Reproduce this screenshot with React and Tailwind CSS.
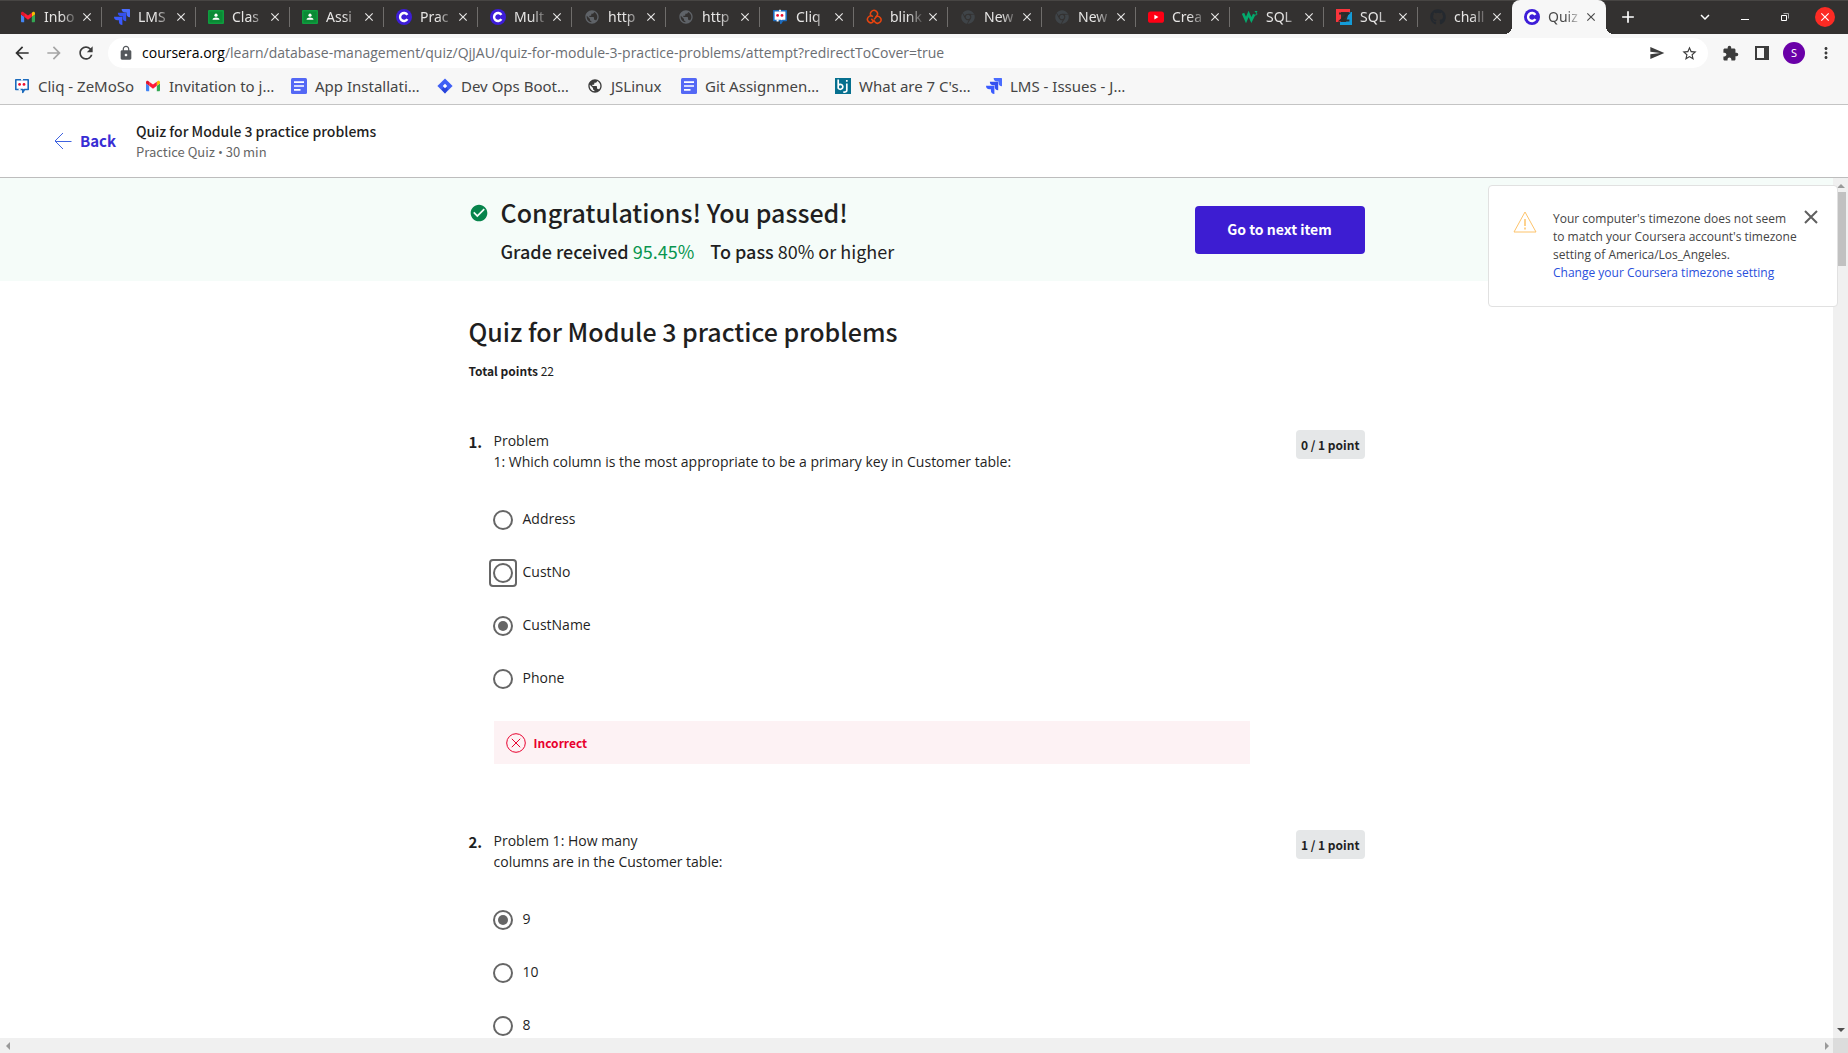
import React from "react";
import {
  MdArrowBack,
  MdArrowForward,
  MdRefresh,
  MdLock,
  MdSend,
  MdStarBorder,
  MdExtension,
  MdMoreVert,
  MdClose,
  MdAdd,
  MdExpandMore,
  MdPublic,
  MdCheckCircle,
} from "react-icons/md";
import { FaGithub, FaChrome } from "react-icons/fa";

const ui = "font-['Noto_Sans','Open_Sans',sans-serif]";
const heading = "font-['Noto_Sans_CJK_SC','Open_Sans',sans-serif]";

function Gmail() {
  return (
    <svg viewBox="52 42 88 66" className="h-3 w-[14px]">
      <path fill="#4285f4" d="M58 108h14V74L52 59v43c0 3.32 2.69 6 6 6" />
      <path fill="#34a853" d="M120 108h14c3.32 0 6-2.69 6-6V59l-20 15" />
      <path fill="#fbbc04" d="M120 48v26l20-15v-8c0-7.42-8.47-11.65-14.4-7.2" />
      <path fill="#ff1a36" d="M72 74V48l24 18 24-18v26L96 92" />
      <path fill="#e0142c" d="M52 51v8l20 15V48l-5.6-4.2c-5.94-4.45-14.4-.22-14.4 7.2" />
    </svg>
  );
}

function Jira() {
  return (
    <svg viewBox="0 0 24 24" className="size-4">
      <path fill="#3b5bff" d="M11.571 11.513H0a5.218 5.218 0 0 0 5.232 5.215h2.13v2.057A5.215 5.215 0 0 0 12.575 24V12.518a1.005 1.005 0 0 0-1.005-1.005z" />
      <path fill="#3450ee" d="M17.294 5.757H5.736a5.215 5.215 0 0 0 5.215 5.214h2.129v2.058a5.218 5.218 0 0 0 5.215 5.214V6.758a1.001 1.001 0 0 0-1.001-1.001z" />
      <path fill="#4a6cff" d="M23.013 0H11.455a5.215 5.215 0 0 0 5.215 5.215h2.129v2.057A5.215 5.215 0 0 0 24 12.483V1.005A1.005 1.005 0 0 0 23.013 0Z" />
    </svg>
  );
}

function Classroom() {
  return (
    <svg viewBox="0 0 16 16" className="size-4">
      <rect y="1" width="16" height="14" rx="1" fill="#0f9d3f" />
      <rect x="1.5" y="2.5" width="13" height="11" fill="#0a8a35" />
      <circle cx="8" cy="6.2" r="1.6" fill="#fff" />
      <path d="M4.5 10.8c0-1.7 1.8-2.4 3.5-2.4s3.5.7 3.5 2.4z" fill="#fff" />
    </svg>
  );
}

function Coursera() {
  return (
    <svg viewBox="0 0 16 16" className="size-4">
      <circle cx="8" cy="8" r="8" fill="#3d1dd8" />
      <path d="M11.4 10.2A4 4 0 1 1 11.4 5.8" fill="none" stroke="#fff" strokeWidth="2.4" />
    </svg>
  );
}

function Cliq() {
  return (
    <svg viewBox="0 0 16 16" className="size-4">
      <path d="M1.8 1.8h12.4v9.7H10.5L8.8 14.4V11.5H1.8z" fill="#fff" stroke="#1c6bbd" strokeWidth="1.6" strokeLinejoin="round" />
      <path d="M8 .8v1.8M4.6 11.5h2" stroke="#fff" strokeWidth="1.8" />
      <circle cx="5.6" cy="6.4" r="1.4" fill="#f00f2e" />
      <circle cx="10" cy="6.4" r="1.4" fill="#f00f2e" />
    </svg>
  );
}

function Loops() {
  return (
    <svg viewBox="0 0 16 16" className="size-4" fill="none" stroke="#e8440f" strokeWidth="1.5">
      <path d="M5.4 7.2A3.5 3.5 0 1 1 10.9 6.8L8.2 10.4" />
      <path d="M7 7.6A3.4 3.4 0 1 0 7.4 12.6L5.4 9.8" />
      <path d="M9.6 8A3.4 3.4 0 1 1 9 13L7.4 10.8" />
    </svg>
  );
}

function YouTube() {
  return (
    <svg viewBox="0 0 16 16" className="size-4">
      <rect y="2.4" width="16" height="11.4" rx="2.6" fill="#ff0014" />
      <path d="M6.4 5.8v4.6L10.4 8.1z" fill="#fff" />
    </svg>
  );
}

function W3() {
  return (
    <svg viewBox="0 0 16 16" className="size-4" fill="none" stroke="#04aa6d">
      <path d="M1 4.2L4 11L6.6 5L9.4 11L12.2 5.4" strokeWidth="2.6" />
      <path d="M12.8 2.5h2.2L13.8 4c1.6 0 1.6 2 0 2l-1-.3" strokeWidth="1" />
    </svg>
  );
}

function ZBlock() {
  return (
    <svg viewBox="0 0 16 16" className="size-4">
      <path d="M0 0h14v3H5v10H0z" fill="#f8353c" />
      <path d="M16 3v13H4v-3h6l3-10z" fill="#149bd7" />
      <path d="M3 4.6h9.4L4.4 11.4h9" fill="none" stroke="#2b2a2a" strokeWidth="2" />
    </svg>
  );
}

function Doc() {
  return (
    <svg viewBox="0 0 16 16" className="size-4">
      <rect width="16" height="16" rx="1.5" fill="#5468f5" />
      <path d="M3 4.2h10M3 8h10M3 11.8h6.5" stroke="#fff" strokeWidth="1.7" />
    </svg>
  );
}

function Diamond() {
  return (
    <svg viewBox="0 0 16 16" className="size-4">
      <path d="M8 .4L15.6 8L8 15.6L.4 8z" fill="#3f5ff5" />
      <path d="M8 8L11 11.2L8 15.6L4.6 11.4z" fill="#2a44d8" />
      <path d="M8 5.8L10.2 8L8 10.2L5.8 8z" fill="#fff" />
    </svg>
  );
}

function Bj() {
  return (
    <svg viewBox="0 0 16 16" className="size-4">
      <rect width="16" height="16" fill="#06708f" />
      <path d="M3.2 1.5v9M3.2 7.5a2.5 2.5 0 1 1 0 2.6M11.8 5.5v6.7c0 1.6-1.4 2.2-3.6 1.8M11.8 2v1.8" fill="none" stroke="#fff" strokeWidth="1.7" />
    </svg>
  );
}

const Globe = () => <MdPublic className="size-4 text-[#5f6368]" />;
const DarkGlobe = () => <MdPublic className="size-4 text-[#3c3c3c]" />;
const DarkChrome = () => <FaChrome className="size-3.5 text-[#3f4448]" />;
const Octocat = () => <FaGithub className="size-4 text-[#24292f]" />;

const tabs = [
  ["Inbo", Gmail],
  ["LMS", Jira],
  ["Clas", Classroom],
  ["Assi", Classroom],
  ["Prac", Coursera],
  ["Mult", Coursera],
  ["http", Globe],
  ["http", Globe],
  ["Cliq", Cliq],
  ["blink", Loops],
  ["New", DarkChrome],
  ["New", DarkChrome],
  ["Crea", YouTube],
  ["SQL", W3],
  ["SQL", ZBlock],
  ["chall", Octocat],
  ["Quiz", Coursera],
];

const bookmarks = [
  ["Cliq - ZeMoSo", Cliq, "w-[131px]"],
  ["Invitation to j…", Gmail, "w-[146px]"],
  ["App Installati…", Doc, "w-[146px]"],
  ["Dev Ops Boot…", Diamond, "w-[150px]"],
  ["JSLinux", DarkGlobe, "w-[94px]"],
  ["Git Assignmen…", Doc, "w-[154px]"],
  ["What are 7 C's…", Bj, "w-[151px]"],
  ["LMS - Issues - J…", Jira, "w-[150px]"],
];

function Tab({ label, Icon, active, last }) {
  return (
    <div
      className={
        active
          ? "relative flex h-full min-w-0 max-w-[94px] flex-1 items-center rounded-t-lg bg-[#f7f7f7] pl-3 text-[#4a4a4a]"
          : "flex h-full min-w-0 max-w-[94px] flex-1 items-center pl-3 text-[#e6e5e4]"
      }
    >
      <span className="flex w-4 shrink-0 justify-center">
        <Icon />
      </span>
      <span className="ml-2 w-[35px] shrink-0 pb-px text-[14px] whitespace-nowrap [mask-image:linear-gradient(to_right,black_50%,transparent)]">
        {label}
      </span>
      <button aria-label={"Close " + label} className="flex size-4 shrink-0 items-center justify-center">
        <MdClose className="size-3.5" />
      </button>
      {!active && !last && <span className="ml-auto h-5 w-px bg-[#6f6d6b]" />}
      {active && (
        <>
          <span className="absolute bottom-0 -left-2 size-2 bg-[radial-gradient(circle_at_0_0,transparent_8px,#f7f7f7_8px)]" />
          <span className="absolute -right-2 bottom-0 size-2 bg-[radial-gradient(circle_at_100%_0,transparent_8px,#f7f7f7_8px)]" />
        </>
      )}
    </div>
  );
}

function TabStrip() {
  return (
    <div className="flex h-[34px] shrink-0 items-center bg-[#333130] pl-2 text-white shadow-[inset_0_1px_#474543]">
      {tabs.map(([label, Icon], i) => (
        <Tab key={i} label={label} Icon={Icon} active={i === tabs.length - 1} last={i === tabs.length - 2} />
      ))}
      <button aria-label="New tab" className="ml-3 flex size-5 items-center justify-center">
        <MdAdd className="size-5" />
      </button>
      <div className="mr-[13px] ml-auto flex items-center gap-5">
        <button aria-label="Search tabs" className="flex size-5 items-center justify-center">
          <MdExpandMore className="size-[18px]" />
        </button>
        <button aria-label="Minimize" className="flex size-5 items-end justify-center pb-[7px]">
          <span className="h-px w-2 bg-white" />
        </button>
        <button aria-label="Restore" className="flex size-5 items-center justify-center">
          <svg viewBox="0 0 10 10" className="size-2.5" fill="none" stroke="#fff">
            <path d="M1.5 3.5h5v5h-5z" />
            <path d="M3.5 1.5h5v5" stroke="#aaa" />
          </svg>
        </button>
        <button aria-label="Close window" className="flex size-5 items-center justify-center rounded-full bg-[#fc2b24]">
          <MdClose className="size-3.5" />
        </button>
      </div>
    </div>
  );
}

function Toolbar() {
  return (
    <div className="flex shrink-0 items-center bg-[#f7f7f7] pt-1 text-[#3c3c3c]">
      <div className="flex gap-3 pl-3">
        <button aria-label="Back" className="flex size-5 items-center justify-center">
          <MdArrowBack className="size-5 text-[#303030]" />
        </button>
        <button aria-label="Forward" className="flex size-5 items-center justify-center">
          <MdArrowForward className="size-5 text-[#a5a5a5]" />
        </button>
        <button aria-label="Reload" className="flex size-5 items-center justify-center">
          <MdRefresh className="size-5" />
        </button>
      </div>
      <div className="ml-3 flex h-[30px] min-w-0 flex-1 items-center rounded-full bg-white pr-2.5 pl-2.5">
        <MdLock className="size-4 shrink-0 text-[#55585c]" />
        <div className="ml-2 min-w-0 flex-1 truncate pb-px font-['Open_Sans',sans-serif] text-[14px] text-[#6b6e73]">
          <span className="text-black">coursera.org</span>
          /learn/database-management/quiz/QjJAU/quiz-for-module-3-practice-problems/attempt?redirectToCover=true
        </div>
        <button aria-label="Share this page" className="mr-4">
          <MdSend className="size-4" />
        </button>
        <button aria-label="Bookmark this page">
          <MdStarBorder className="size-[17px]" />
        </button>
      </div>
      <div className="flex items-center gap-3 pr-3 pl-3">
        <button aria-label="Extensions" className="flex size-5 items-center justify-center">
          <MdExtension className="size-[17px]" />
        </button>
        <button aria-label="Side panel" className="flex size-5 items-center justify-center">
          <span className="h-3.5 w-3.5 border-2 border-r-[5px] border-[#3c3c3c]" />
        </button>
        <button className="-mx-px flex size-[22px] items-center justify-center rounded-full bg-[#6a00a8] text-[11px] text-white">
          S
        </button>
        <button aria-label="Menu" className="flex size-5 items-center justify-center">
          <MdMoreVert className="size-[18px]" />
        </button>
      </div>
    </div>
  );
}

function Bookmarks() {
  return (
    <div className="flex h-[37px] shrink-0 items-center border-b border-[#c4c4c4] bg-[#f7f7f7] pb-px pl-3.5 text-[15px] leading-5 text-[#444]">
      {bookmarks.map(([label, Icon, width]) => (
        <a key={label} href="#" className={"flex items-center gap-2 whitespace-nowrap " + width}>
          <span className="flex w-4 shrink-0 justify-center">
            <Icon />
          </span>
          {label}
        </a>
      ))}
    </div>
  );
}

function QuizHeader() {
  return (
    <header className={"flex h-[73px] shrink-0 items-center border-b border-[#bdbdbd] bg-white pl-[54px] text-[#1f1f1f] " + heading}>
      <a href="#" className="flex items-center gap-2 text-[15px] leading-5 font-bold text-[#382dd4]">
        <svg viewBox="0 0 18 18" className="size-[18px]" fill="none" stroke="#3f63e0">
          <path d="M9 1L1 9l8 8M1 9.5h16.5" />
        </svg>
        Back
      </a>
      <div className="ml-5 pb-px">
        <h1 className="text-[14px] leading-[22px] font-medium">Quiz for Module 3 practice problems</h1>
        <p className="text-[13px] leading-5 text-[#666]">
          Practice Quiz <span className="font-['Open_Sans',sans-serif]">•</span> 30 min
        </p>
      </div>
    </header>
  );
}

function Banner() {
  return (
    <section className="bg-[#f5fcf9]">
      <div className={"mx-auto flex h-[103px] max-w-[896px] items-center text-[#1f1f1f] " + heading}>
        <div className="flex gap-3">
          <MdCheckCircle className="mt-2 size-5 text-[#07844c]" />
          <div>
            <h2 className="text-[25px] leading-[34px] font-medium">Congratulations! You passed!</h2>
            <p className="mt-2 flex gap-4 text-[18px] leading-7">
              <span>
                <b className="font-medium">Grade received</b> <span className="text-[#08954f]">95.45%</span>
              </span>
              <span>
                <b className="font-medium">To pass</b> 80% or higher
              </span>
            </p>
          </div>
        </div>
        <button className="ml-auto h-12 w-[170px] rounded bg-[#3d1dd2] text-[14px] font-bold text-white">
          Go to next item
        </button>
      </div>
    </section>
  );
}

function Option({ name, label, checked, focused }) {
  return (
    <label className="flex h-[53px] items-center gap-2.5 text-[14px] leading-5 text-[#1f1f1f]">
      <span className={focused ? "-m-1 flex rounded-sm border-2 border-[#666] p-0.5" : "flex"}>
        <input
          type="radio"
          name={name}
          defaultChecked={checked}
          className="size-5 appearance-none rounded-full border-2 border-[#666] p-[3px] checked:bg-[#666] checked:bg-clip-content"
        />
      </span>
      <span className="pb-px">{label}</span>
    </label>
  );
}

function Question({ number, lines, options, score, incorrect }) {
  const name = "question-" + number;
  return (
    <section className="flex items-start pb-[66px]">
      <div className={"w-[25px] shrink-0 pt-0.5 text-[15px] leading-5 font-bold text-[#1f1f1f] " + heading}>
        {number}.
      </div>
      <fieldset className="min-w-0 flex-1">
        <legend className="text-[14px] leading-[21px] text-[#1f1f1f]">
          {lines.map((line) => (
            <span key={line} className="block">
              {line}
            </span>
          ))}
        </legend>
        <div className="-ml-px pt-[21px]">
          {options.map((o) => (
            <Option key={o.label} name={name} {...o} />
          ))}
        </div>
        {incorrect && (
          <div className={"mt-4 flex h-[43px] items-center gap-2 bg-[#fdf2f4] pl-3 text-[12px] font-bold text-[#e8002e] " + heading}>
            <svg viewBox="0 0 20 20" className="size-5" fill="none" stroke="#e8002e">
              <circle cx="10" cy="10" r="9.3" />
              <path d="M5.8 5.8l8.4 8.4M14.2 5.8l-8.4 8.4" />
            </svg>
            Incorrect
          </div>
        )}
      </fieldset>
      <div className="flex w-[115px] shrink-0 justify-end">
        <span className={"rounded bg-[#e5e7e8] px-[5px] py-1 text-[12px] leading-[21px] font-bold text-[#1f1f1f] " + heading}>
          {score}
        </span>
      </div>
    </section>
  );
}

function Toast() {
  return (
    <aside className="absolute top-[7px] right-2.5 flex w-[350px] items-start rounded-sm border border-[#e1e1e1] bg-white pt-6 pr-[19px] pb-6 pl-6 text-[12px] leading-[18px] text-[#444]">
      <svg viewBox="0 0 24 22" className="mt-px h-[22px] w-6 shrink-0" fill="none" stroke="#fdc36b">
        <path d="M12 1L23 21H1z" />
        <path d="M12 8v7M12 16.5v2" strokeWidth="1.5" />
      </svg>
      <p className="ml-4 flex-1 whitespace-nowrap">
        Your computer's timezone does not seem
        <br />
        to match your Coursera account's timezone
        <br />
        setting of America/Los_Angeles.
        <br />
        <a href="#" className="text-[#2a50dc]">
          Change your Coursera timezone setting
        </a>
      </p>
      <button aria-label="Dismiss" className="-ml-4 flex">
        <svg viewBox="0 0 14 14" className="size-3.5" stroke="#5f5f5f" strokeWidth="2">
          <path d="M1 1l12 12M13 1L1 13" />
        </svg>
      </button>
    </aside>
  );
}

function Page() {
  return (
    <div className="relative flex min-h-0 flex-1">
      <main className="min-w-0 flex-1 overflow-hidden">
        <Banner />
        <div className="mx-auto max-w-[896px] pt-8">
          <h2 className={"text-[25px] leading-9 font-medium text-[#1f1f1f] " + heading}>
            Quiz for Module 3 practice problems
          </h2>
          <p className={"mt-3 text-[12px] leading-5 text-[#1f1f1f] " + heading}>
            <b>Total points</b> 22
          </p>
          <div className="mt-[49px]">
            <Question
              number={1}
              lines={["Problem", "1: Which column is the most appropriate to be a primary key in Customer table:"]}
              score="0 / 1 point"
              incorrect
              options={[
                { label: "Address" },
                { label: "CustNo", focused: true },
                { label: "CustName", checked: true },
                { label: "Phone" },
              ]}
            />
            <Question
              number={2}
              lines={["Problem 1: How many", "columns are in the Customer table:"]}
              score="1 / 1 point"
              options={[{ label: "9", checked: true }, { label: "10" }, { label: "8" }]}
            />
          </div>
        </div>
      </main>
      <div className="flex w-[15px] shrink-0 flex-col items-center bg-[#f0f0f0] py-1.5">
        <svg viewBox="0 0 8 4" className="h-1 w-2">
          <path d="M4 0l4 4H0z" fill="#9a9a9a" />
        </svg>
        <div className="mt-1 h-[74px] w-2.5 bg-[#c1c1c1]" />
        <svg viewBox="0 0 8 4" className="mt-auto h-1 w-2">
          <path d="M0 0h8L4 4z" fill="#505050" />
        </svg>
      </div>
      <Toast />
    </div>
  );
}

export default function App() {
  return (
    <div className="flex h-screen flex-col overflow-hidden bg-white font-['Open_Sans',sans-serif]">
      <div className={"contents " + ui}>
        <TabStrip />
        <Toolbar />
        <Bookmarks />
      </div>
      <QuizHeader />
      <Page />
      <div className="flex h-[15px] shrink-0 items-center bg-[#f0f0f0]">
        <svg viewBox="0 0 4 8" className="ml-1.5 h-2 w-1">
          <path d="M4 0v8L0 4z" fill="#9a9a9a" />
        </svg>
        <svg viewBox="0 0 4 8" className="mr-1 ml-auto h-2 w-1">
          <path d="M0 0v8l4-4z" fill="#9a9a9a" />
        </svg>
        <div className="h-full w-[15px] bg-[#dcdcdc]" />
      </div>
    </div>
  );
}
